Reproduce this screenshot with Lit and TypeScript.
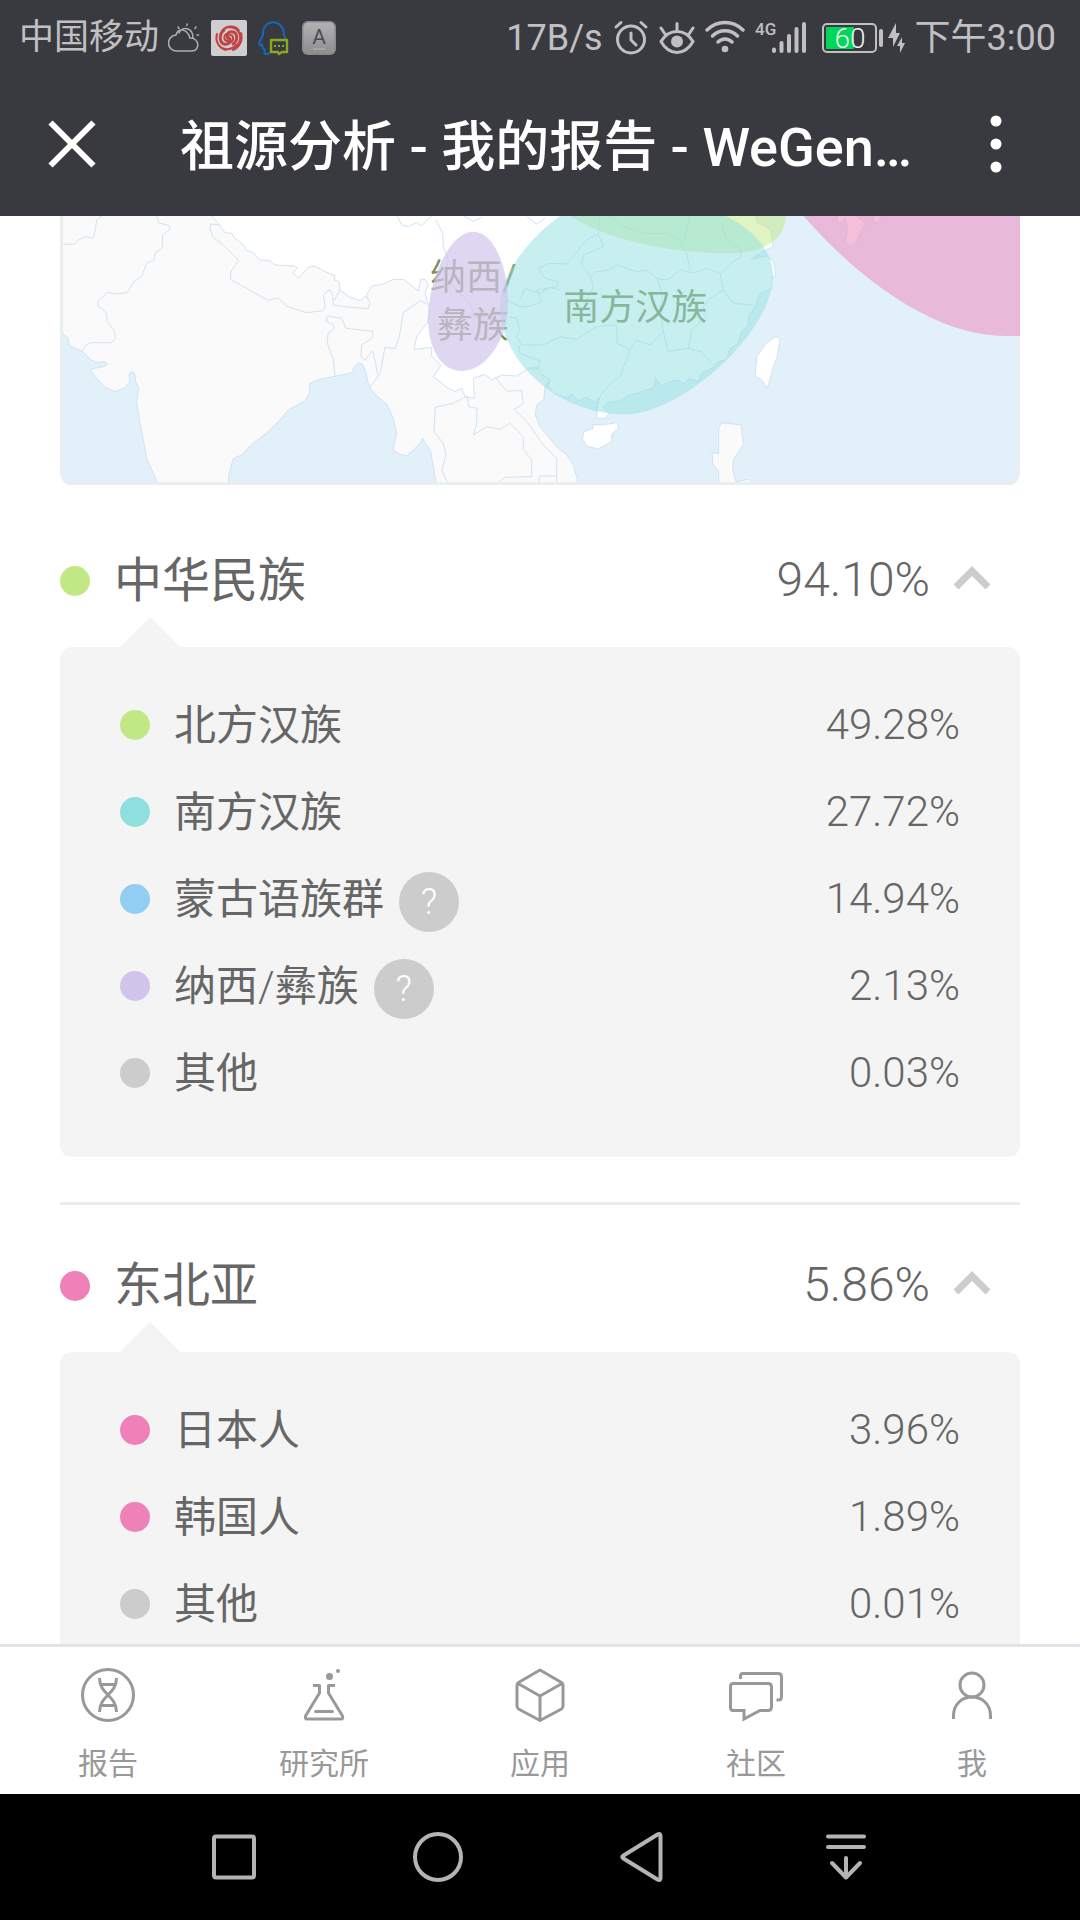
import { LitElement, html, svg, css, nothing } from "lit";
import { customElement, property, state } from "lit/decorators.js";

interface Item {
  name: string;
  value: string;
  color: string;
  help?: boolean;
}
interface Group extends Item {
  items: Item[];
}

const GROUPS: Group[] = [
  {
    name: "中华民族",
    value: "94.10%",
    color: "#c0e986",
    items: [
      { name: "北方汉族", value: "49.28%", color: "#c0e986" },
      { name: "南方汉族", value: "27.72%", color: "#8fdfdf" },
      { name: "蒙古语族群", value: "14.94%", color: "#92cdf2", help: true },
      { name: "纳西/彝族", value: "2.13%", color: "#d1c4eb", help: true },
      { name: "其他", value: "0.03%", color: "#cccccc" },
    ],
  },
  {
    name: "东北亚",
    value: "5.86%",
    color: "#ef81b8",
    items: [
      { name: "日本人", value: "3.96%", color: "#ef81b8" },
      { name: "韩国人", value: "1.89%", color: "#ef81b8" },
      { name: "其他", value: "0.01%", color: "#cccccc" },
    ],
  },
];

@customElement("status-bar")
class StatusBar extends LitElement {
  static styles = css`
    :host {
      display: flex;
      justify-content: space-between;
      align-items: center;
      box-sizing: border-box;
      height: 72px;
      padding: 4px 24px 0 19px;
      color: #c0c0c3;
      font-size: 36px;
      line-height: 44px;
      white-space: nowrap;
    }
    .side {
      display: flex;
      align-items: center;
      gap: 10px;
    }
    .notices {
      gap: 9px;
      font-size: 35px;
    }
    svg {
      display: block;
      flex: none;
    }
    .gen {
      font-size: 17px;
      font-weight: 500;
      fill: #c0c0c3;
    }
    .level {
      font-size: 28px;
      font-weight: 300;
      fill: #f2f2f2;
    }
    .key {
      font-size: 21px;
      fill: #4b4c52;
    }
  `;
  render() {
    return html`
      <div class="side notices">
        <span>中国移动</span>
        <svg width="34" height="36" viewBox="0 0 34 36" fill="none" stroke="#b0b0b3" stroke-width="1.5" stroke-linecap="round">
          <path d="M9 31 a8 8 0 0 1 -1 -16 C10 8 19 8 22 18 C32 18 32 31 24 31 Z M11 13 C14 6 25 7 25 18 M19 4 v1.500 M10 7 l1 1.500 M28 7 l-1 1.500 M29 15 h1.500" />
        </svg>
        <svg width="36" height="36" viewBox="0 0 36 36">
          <rect width="36" height="36" rx="2" fill="#cfcfd1" />
          <g fill="none" stroke="#c24345" stroke-linecap="round">
            <path stroke-width="3" d="M18 19 C14 16 17 11 22 12 C27 13 27 21 22 24 M18 18 C21 21 18 25 13 24 C8 22 8 14 13 10" />
            <path stroke-width="2" d="M11 11 C15 5 25 5 28 11 M14 8 C20 6 27 8 29 15 C30 21 27 25 23 27 M25 25 C20 31 11 30 8 25 M6 14 C4 20 7 28 15 30 M30 13 C32 20 29 27 22 30 M19 15 C23 15 23 20 20 22 M17 21 C13 21 12 17 15 14" />
          </g>
        </svg>
        <svg width="36" height="36" viewBox="0 0 36 36" fill="none" stroke-width="2" stroke-linejoin="round">
          <path stroke="#1767b8" d="M14 33 C10 35 7 34 9 30 C6 28 6 26 6 24 C4 27 2 25 4 21 L7 15 C6 -2 28 -2 28 15 L30 20" />
          <path stroke="#8aa91e" stroke-width="2.400" d="M15 20 H31 V32 H26 L23 34 L22 32 H15 Z" />
          <path stroke="#8aa91e" d="M18 26 h2 M22 26 h2 M26 26 h2" />
        </svg>
        <svg width="36" height="36" viewBox="0 0 36 36">
          <defs>
            <linearGradient id="key" x2="0" y2="1">
              <stop offset="0" stop-color="#b2b2b4" />
              <stop offset="1" stop-color="#8e8e90" />
            </linearGradient>
          </defs>
          <rect x="1" y="1" width="34" height="34" rx="6" fill="#8a8a8c" />
          <rect x="2.500" y="2.500" width="31" height="31" rx="5" fill="url(#key)" />
          <text class="key" x="18" y="24" text-anchor="middle">A</text>
          <path d="M12 29 h12" stroke="#b8b8ba" stroke-width="1" />
        </svg>
      </div>
      <div class="side">
        <span>17B/s</span>
        <svg width="36" height="36" viewBox="0 0 36 36" fill="none" stroke="#c0c0c3" stroke-width="3" stroke-linecap="round">
          <circle cx="18" cy="19.500" r="13.500" />
          <path d="M18 13 V20 L23 25 M3 7 L8 2.500 M33 7 L28 2.500" />
        </svg>
        <svg width="36" height="36" viewBox="0 0 36 36" fill="none" stroke="#c0c0c3" stroke-width="3" stroke-linecap="round">
          <path d="M2 21.500 C10 8 26 8 34 21.500 C26 36 10 36 2 21.500 Z M18 11 V3.500 M6 14 L2 8 M30 14 L34 8" />
          <circle cx="18" cy="21.500" r="6" fill="#c0c0c3" stroke="none" />
        </svg>
        <svg width="40" height="36" viewBox="0 0 40 36" fill="none" stroke="#c0c0c3" stroke-width="3.400" stroke-linecap="round">
          <path d="M2 10 C12 0 28 0 38 10 M7.500 16 C14 9 26 9 32.500 16 M13 22 C17 18 23 18 27 22" />
          <circle cx="20" cy="29" r="3.300" fill="#c0c0c3" stroke="none" />
        </svg>
        <svg width="52" height="36" viewBox="0 0 52 36">
          <text class="gen" x="0" y="15">4G</text>
          <path fill="none" stroke="#c0c0c3" stroke-width="4" stroke-linecap="round" d="M19 29.500 V31 M26.500 23 V31 M34 16 V31 M41.500 9 V31 M49 4 V31" />
        </svg>
        <svg width="88" height="36" viewBox="0 0 88 36">
          <rect x="6" y="4" width="53" height="28" rx="4" fill="none" stroke="#c0c0c3" stroke-width="2" />
          <rect x="9" y="7" width="28" height="22" rx="1" fill="#00d759" />
          <text class="level" x="33" y="28" text-anchor="middle">60</text>
          <path d="M64 11 V25" stroke="#c0c0c3" stroke-width="4" stroke-linecap="round" />
          <path fill="#c0c0c3" d="M79 3 L71 18 H76 L76 27 L83 13 H79 Z M85 17 L80 26 H83 L83 33 L88 23 H85 Z" />
        </svg>
        <time>下午3:00</time>
      </div>
    `;
  }
}

const PROVINCES = [
  "M60 103 H103 L112 92 L135 80 L160 84 L166 60 L170 30 L185 18",
  "M350 18 L358 40 L385 45 L391 58 L368 75 L366 115 L345 130 L342 152 L320 158 L305 200 L282 215 L262 248 L225 252 L203 247 L175 272 L173 288 L197 305 L202 335 L222 360 L227 385 L215 398 H152 L138 405 L128 424",
  "M540 45 L512 42 L510 60 L520 82 L550 105 L575 130 L596 152 L574 182 L571 208 L620 235 L683 271 L715 264 L740 288 L798 308 L850 302 L855 285 L850 255 L868 238 L878 255 L880 285 L910 290 L985 296 L990 280 L980 258 M900 240 L882 272",
  "M885 499 L880 450 L862 400 L864 370 L883 355 L878 342 L858 335 L862 318 L905 325 L918 355 L1000 364 L995 385 L965 405 L963 440 L975 451 L998 422 L1007 460 L1013 495 M990 530 L1003 515 L1020 490 L1035 412 L1065 416 L1078 380 L1090 308 L1140 272 L1160 283",
  "M1222 818 L1205 780 L1218 735 L1210 700 L1182 665 L1186 592 L1240 580 L1282 558 L1286 590 L1311 595 L1310 640 L1300 675 L1340 650 L1380 658 L1410 640 L1450 680 L1450 718 L1475 750 V800 L1395 802 L1375 818",
  "M1365 502 L1400 543 L1445 542 L1450 580 L1423 598 L1465 640 L1510 705 L1550 745 V818 M1495 818 L1500 798 L1550 798",
  "M1072 18 L1085 45 L1105 50 L1130 38 L1145 48 L1160 30 L1175 18 M1188 30 L1208 70 L1210 110 L1225 150 L1215 200 L1250 240 L1290 280 L1305 325 L1340 318 L1380 300 M1270 18 L1300 34 L1325 22 M1460 20 L1490 42 L1515 25",
  "M1440 270 L1455 235 L1500 250 L1530 232 L1560 240 M1400 270 L1440 290 L1475 288 L1505 275 L1490 240 L1550 230 L1555 215 L1515 205 L1495 175 L1530 160 L1580 162 L1640 90 L1675 72 L1690 110 L1630 135 L1625 165 L1652 200 L1660 230 L1640 270 L1670 300",
  "M1405 320 L1430 325 L1440 360 L1430 380 L1445 405 L1510 405 L1560 380 L1610 388 L1670 350 L1730 345 L1732 400 L1770 420 L1790 390 L1830 405 L1870 365 L1885 425 L1940 415 L1985 425 L2015 460",
  "M1435 405 L1440 430 L1500 452 L1495 475 L1465 478 M1770 420 L1740 500 L1710 520 L1690 545 L1672 570",
  "M1652 200 L1670 185 L1710 180 L1730 165 L1790 185 L1820 180 L1850 205 L1880 210 L1925 180 L1960 190 L2000 175 L2040 190 L2050 240 L2010 265 L1990 290 L1998 320 L1955 360 L1945 415 M1850 205 L1868 250 L1860 300 L1870 365",
  "M1675 72 L1680 18 M1710 18 L1750 50 L1810 70 L1880 70 L1930 98 L1940 60 L1950 18 M1920 100 L1940 130 L1950 180 M2045 40 L2060 90 L2100 115 L2105 140 L2070 160 L2045 190 M2050 240 L2080 280 L2140 285",
];

@customElement("ancestry-map")
class AncestryMap extends LitElement {
  static styles = css`
    :host {
      display: block;
      border-radius: 0 0 12px 12px;
      overflow: hidden;
    }
    svg {
      display: block;
      width: 100%;
      height: auto;
    }
    .label {
      font-size: 108px;
      fill: #7d8f58;
    }
  `;
  render() {
    return html`
      <svg viewBox="60 18 2880 807" role="img" aria-label="祖源分布">
        <rect x="60" y="18" width="2880" height="807" fill="#e2f0fa" />
        <g stroke="#cfe3f3" stroke-width="3" stroke-linejoin="round">
          <path
            fill="#fafafa"
            d="M60 0 V370 L70 372 L85 385 L88 405 L105 415 L128 424 L150 448 L170 457 L195 455 L203 462 L190 470 L150 478 L170 505 L195 530 L225 545 L255 533 L270 515 L267 495 L275 484 L284 490 L287 515 L296 535 L290 575 L300 640 L310 690 L320 745 L340 790 L357 830 H565 L567 790 L580 745 L605 735 L630 708 L680 668 L715 635 L745 600 L795 572 L808 550 L810 520 L840 508 L885 499 L935 488 L943 470 L955 459 L967 462 L975 480 L985 520 L990 535 L1010 558 L1040 582 L1060 625 L1070 670 L1058 720 L1080 733 L1100 738 L1120 720 L1140 700 L1147 685 L1172 725 L1180 770 L1190 830 H1615 L1610 800 L1600 765 L1580 735 L1550 710 L1500 650 L1486 615 L1490 585 L1512 568 L1515 530 L1600 400 L1700 0 Z"
          />
          <path
            fill="#ffffff"
            d="M515 0 V18 L535 40 L555 68 L575 70 L585 85 L610 105 L620 122 L640 128 L660 150 L690 152 L705 165 L765 168 L772 175 L758 188 L775 205 L805 172 L825 168 L855 185 L885 197 L883 210 L897 215 L900 240 L930 262 L960 272 L978 258 L995 228 L1030 222 L1060 208 L1090 208 L1110 223 L1135 243 L1142 208 L1155 208 L1165 225 L1155 245 L1160 270 L1170 300 L1162 338 L1130 380 L1122 418 L1175 412 L1175 440 L1203 466 L1180 500 L1225 535 L1245 545 L1265 535 L1275 560 L1303 565 L1300 505 L1335 493 L1355 510 L1385 495 L1430 498 L1465 475 L1490 470 L1500 490 L1530 510 L1525 530 L1545 553 L1580 563 L1595 553 L1615 572 L1640 562 L1665 578 L1678 565 L1672 590 L1670 625 L1698 625 L1706 610 L1690 595 L1700 578 L1740 572 L1765 555 L1800 548 L1815 540 L1840 535 L1847 503 L1862 528 L1890 515 L1915 510 L1930 522 L1950 505 L1975 515 L1985 490 L2020 472 L2035 455 L2060 448 L2070 415 L2095 400 L2105 365 L2125 345 L2125 320 L2145 290 L2160 250 L2195 235 L2198 200 L2208 195 L2200 155 L2180 138 L2132 148 L2180 118 L2200 110 L2192 60 L2150 35 L2145 0 Z"
          />
          <path fill="#ffffff" d="M2207 380 L2220 385 L2212 440 L2202 465 L2192 500 L2182 535 L2165 510 L2145 498 L2150 440 L2178 400 Z" />
          <path fill="#ffffff" d="M1655 645 L1710 642 L1732 637 L1735 655 L1715 672 L1715 695 L1675 717 L1640 708 L1627 685 L1632 665 L1660 655 Z" />
          <path fill="#fafafa" d="M2036 830 V785 L2018 760 L2016 728 L2036 732 V655 L2045 638 L2105 645 V668 L2112 700 L2080 750 L2078 780 L2088 815 L2125 808 L2150 830 Z" />
          <path fill="#fafafa" d="M2392 0 L2390 30 L2400 42 L2415 25 L2422 60 L2415 95 L2430 111 L2445 100 L2478 38 L2445 15 Z M2495 0 L2502 35 L2515 40 L2530 10 Z" />
          ${PROVINCES.map((d) => svg`<path fill="none" d=${d} />`)}
        </g>
        <path fill="none" stroke="#e9eef1" stroke-width="9" d="M64.500 18 V790 Q64.500 820.500 95 820.500 H2905 Q2935.500 820.500 2935.500 790 V18" />
        <text class="label" x="1170" y="239">纳西/</text>
        <text class="label" x="1190" y="383">彝族</text>
        <text class="label" x="1570" y="330">南方汉族</text>
        <path fill="#c0e986" fill-opacity="0.500" d="M1585 15 C1700 90 1890 130 2070 130 C2180 130 2238 80 2238 15 Z" />
        <path fill="#8fdfdf" fill-opacity="0.500" d="M1565 15 C1480 70 1380 190 1380 290 C1380 450 1550 613 1755 613 C1920 613 2199 370 2199 195 C2199 120 2130 50 2050 15 Z" />
        <path fill="#d1c4eb" fill-opacity="0.700" d="M1300 65 C1365 65 1404 180 1404 275 C1404 400 1330 483 1265 483 C1200 483 1164 410 1164 325 C1164 220 1225 65 1300 65 Z" />
        <path fill="#ef81b8" fill-opacity="0.500" d="M2288 15 C2440 190 2670 378 2900 378 H2940 V15 Z" />
      </svg>
    `;
  }
}

@customElement("ancestry-group")
class AncestryGroup extends LitElement {
  @property({ attribute: false }) group!: Group;
  @state() private open = true;

  static styles = css`
    :host {
      display: block;
      padding-bottom: 45px;
      color: #666666;
    }
    h2 {
      margin: 0;
      padding: 50px 28px 39px 0;
      font-size: 48px;
      font-weight: 300;
    }
    .toggle {
      display: flex;
      align-items: center;
      width: 100%;
      height: 58px;
      padding: 0;
      border: 0;
      background: none;
      color: inherit;
      font: inherit;
      text-align: left;
    }
    .dot {
      flex: none;
      width: 30px;
      height: 30px;
      margin-right: 24px;
      border-radius: 50%;
    }
    .toggle .dot {
      margin-top: 4px;
    }
    .name {
      padding-bottom: 6px;
      font-weight: 400;
    }
    .toggle .name {
      flex: 1;
    }
    .thin {
      font-weight: 300;
    }
    .chevron {
      margin-left: 22px;
    }
    .panel {
      position: relative;
      margin: 0;
      padding: 34px 60px 41px;
      border-radius: 12px;
      background: #f4f4f4;
      list-style: none;
      font-size: 42px;
      font-weight: 300;
    }
    .panel::before {
      content: "";
      position: absolute;
      left: 60px;
      bottom: 100%;
      border: 30px solid transparent;
      border-top: 0;
      border-bottom-color: #f4f4f4;
    }
    .row {
      display: flex;
      align-items: center;
      height: 87px;
    }
    .item {
      display: flex;
      flex: 1;
      align-items: center;
      gap: 15px;
    }
    .help {
      width: 60px;
      height: 60px;
      margin-top: 6px;
      padding: 0;
      border: 0;
      border-radius: 50%;
      background: #cccccc;
      color: #ffffff;
      font: inherit;
      font-size: 36px;
    }
  `;
  private name(text: string) {
    const [first, ...rest] = text.split("/");
    return html`<span class="name">${first}${rest.map((part) => html`<span class="thin">/</span>${part}`)}</span>`;
  }
  render() {
    const g = this.group;
    return html`
      <h2>
        <button class="toggle" aria-expanded=${this.open} @click=${() => (this.open = !this.open)}>
          <span class="dot" style="background:${g.color}"></span>
          ${this.name(g.name)}
          <span>${g.value}</span>
          <svg class="chevron" width="40" height="30" viewBox="0 0 40 30" fill="none" stroke="#cccccc" stroke-width="7">
            <path d=${this.open ? "M4 23 L20 7 L36 23" : "M4 7 L20 23 L36 7"} />
          </svg>
        </button>
      </h2>
      ${this.open
        ? html`<ul class="panel">
            ${g.items.map(
              (i) => html`<li class="row">
                <span class="dot" style="background:${i.color}"></span>
                <span class="item"
                  >${this.name(i.name)}${i.help
                    ? html`<button class="help" aria-label="说明">?</button>`
                    : nothing}</span
                >
                <span>${i.value}</span>
              </li>`
            )}
          </ul>`
        : nothing}
    `;
  }
}

const TABS = [
  {
    label: "报告",
    icon: svg`<circle cx="30" cy="30" r="25.500" /><path d="M21.500 13 C21.500 30 38.500 30 38.500 47 M38.500 13 C38.500 30 21.500 30 21.500 47 M23 19.500 H37 M23 40.500 H37" />`,
  },
  {
    label: "研究所",
    icon: svg`<path stroke-linejoin="round" d="M19 20.500 H25.500 V28 L11.500 51 Q11 54 13 54 H47 Q49.500 54 48.500 51 L34.500 28 V20.500 H41" /><path stroke-linecap="round" d="M21.500 46.500 H38.500" /><circle cx="35.500" cy="11.500" r="3.500" fill="#999999" stroke="none" /><circle cx="44" cy="6" r="2" fill="#999999" stroke="none" />`,
  },
  {
    label: "应用",
    icon: svg`<path stroke-linejoin="round" d="M30 5 L51.500 17.500 Q53 18.500 53 20 V41 Q53 43 51.500 44 L30 55.500 L8.500 44 Q7 43 7 41 V20 Q7 18.500 8.500 17.500 Z M8 18.500 L30 31 L52 18.500 M30 31 V55" />`,
  },
  {
    label: "社区",
    icon: svg`<path d="M7 18.500 H42 Q45.500 18.500 45.500 22 V42 Q45.500 45.500 42 45.500 H34 L18 54 V45.500 H7 Q4.500 45.500 4.500 42 V22 Q4.500 18.500 7 18.500 Z M14.500 14 V11 Q14.500 8.500 17 8.500 H52 Q55.500 8.500 55.500 12 V32 Q55.500 35 52 35 H50.500" />`,
  },
  {
    label: "我",
    icon: svg`<circle cx="30" cy="20" r="12" /><path d="M11.500 54 V51 C11.500 39 20 32 30 32 C40 32 48.500 39 48.500 51 V54" />`,
  },
];

const KEYS = [
  { label: "最近任务", icon: svg`<rect x="10" y="9.500" width="40" height="41" rx="2" />` },
  { label: "主屏幕", icon: svg`<circle cx="30" cy="30" r="23" />` },
  { label: "返回", icon: svg`<path stroke-linejoin="round" d="M11.500 28.500 L45.500 7.500 Q48.500 6 48.500 9 V51 Q48.500 54 45.500 52.500 L11.500 31.500 Q9 30 11.500 28.500 Z" />` },
  { label: "下拉通知", icon: svg`<path stroke-linecap="round" stroke-linejoin="round" d="M12 9.500 H48 M12 20 H48 M30 31 V50 M16 36 L30 50.500 L44 36" />` },
];

@customElement("app-root")
class AppRoot extends LitElement {
  static styles = css`
    :host {
      display: flex;
      flex-direction: column;
      height: 100vh;
      overflow: hidden;
      background: #ffffff;
      font-family: Roboto, "Noto Sans CJK SC", sans-serif;
    }
    .top {
      flex: none;
      background: #393a3f;
    }
    .bar {
      display: flex;
      align-items: center;
      height: 144px;
      color: #ffffff;
    }
    .bar button {
      display: flex;
      flex: none;
      justify-content: center;
      align-items: center;
      width: 144px;
      height: 144px;
      padding: 0;
      border: 0;
      background: none;
    }
    .rule {
      width: 2px;
      height: 72px;
      background: #2e2f33;
    }
    .title {
      flex: 1;
      margin: 0;
      padding: 8px 0 0 36px;
      font-size: 54px;
      font-weight: 500;
      line-height: 80px;
      white-space: nowrap;
    }
    .bar .more {
      width: 168px;
    }
    .content {
      flex: 1;
      min-height: 0;
      overflow: hidden;
      padding: 0 60px;
    }
    .groups {
      padding-top: 15px;
    }
    .groups ancestry-group + ancestry-group {
      border-top: 3px solid #e9eef1;
    }
    .tabs {
      display: flex;
      flex: none;
      border-top: 3px solid #e1e5e9;
      background: #ffffff;
    }
    .tabs a {
      display: flex;
      flex: 1;
      flex-direction: column;
      align-items: center;
      gap: 19px;
      padding: 18px 0 10px;
      color: #999999;
      font-size: 30px;
      line-height: 40px;
      text-decoration: none;
    }
    .keys {
      display: flex;
      flex: none;
      justify-content: center;
      height: 126px;
      background: #000000;
    }
    .keys button {
      display: flex;
      flex: 0 1 204px;
      justify-content: center;
      align-items: center;
      padding: 0;
      border: 0;
      background: none;
    }
  `;
  render() {
    return html`
      <header class="top">
        <status-bar></status-bar>
        <div class="bar">
          <button aria-label="关闭">
            <svg width="48" height="48" viewBox="0 0 48 48" stroke="#ffffff" stroke-width="6"><path d="M2.500 2.500 L45.500 45.500 M45.500 2.500 L2.500 45.500" /></svg>
          </button>
          <span class="rule"></span>
          <h1 class="title">祖源分析 - 我的报告 - WeGen…</h1>
          <button class="more" aria-label="更多">
            <svg width="12" height="58" viewBox="0 0 12 58" fill="#ffffff"><circle cx="6" cy="6" r="5.500" /><circle cx="6" cy="29" r="5.500" /><circle cx="6" cy="52" r="5.500" /></svg>
          </button>
        </div>
      </header>
      <main class="content">
        <ancestry-map></ancestry-map>
        <div class="groups">${GROUPS.map((g) => html`<ancestry-group .group=${g}></ancestry-group>`)}</div>
      </main>
      <nav class="tabs">
        ${TABS.map(
          (t) => html`<a href="#">
            <svg width="60" height="60" viewBox="0 0 60 60" fill="none" stroke="#999999" stroke-width="3">${t.icon}</svg>
            <span>${t.label}</span>
          </a>`
        )}
      </nav>
      <div class="keys">
        ${KEYS.map(
          (k) => html`<button aria-label=${k.label}>
            <svg width="60" height="60" viewBox="0 0 60 60" fill="none" stroke="#b4b4b4" stroke-width="4">${k.icon}</svg>
          </button>`
        )}
      </div>
    `;
  }
}
